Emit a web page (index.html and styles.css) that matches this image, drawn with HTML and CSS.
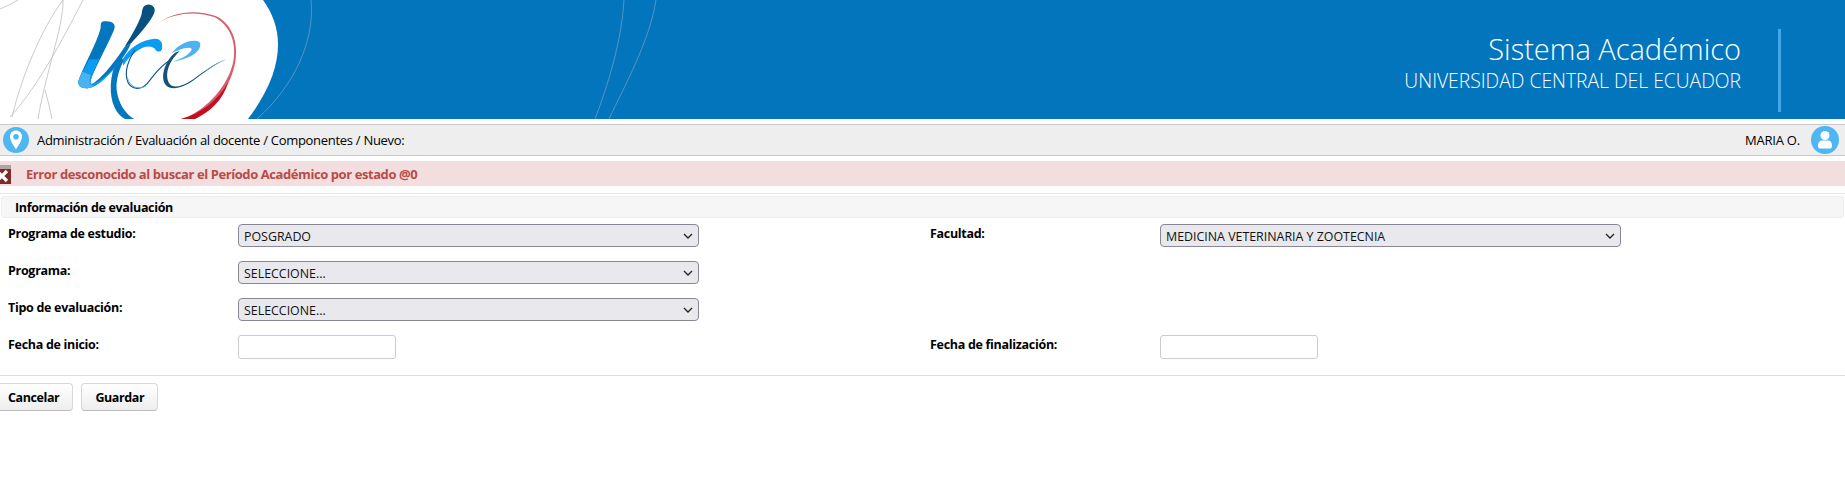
FILE: index.html
```html
<!DOCTYPE html>
<html lang="es">
<head>
<meta charset="utf-8">
<title>Sistema Académico</title>
<link rel="stylesheet" href="styles.css">
</head>
<body>
<header class="banner">
  <svg class="banner-art" viewBox="0 0 760 119" width="760" height="119" aria-hidden="true">
    <path d="M263 0 C285 30 285 70 248 119 L0 119 L0 0 Z" fill="#fff"/>
    <g fill="none" stroke="#bdbdbd" stroke-width=".8">
      <path d="M0 9 C7 6 13 3 18 0"/>
      <path d="M63 0 C42 28 22 75 12 117"/>
      <path d="M83 0 C70 25 40 85 10 117"/>
      <path d="M63 0 C64 25 45 75 38 119"/>
      <path d="M45 90 C48 100 50 110 52 119"/>
    </g>
    <g fill="none" stroke="#5c97c4" stroke-width=".9">
      <path d="M311 0 C315 40 295 85 257 119"/>
      <path d="M624 0 C622 40 608 85 595 119"/>
      <path d="M656 0 C650 40 625 85 609 119"/>
    </g>
    <g transform="translate(60 0) scale(.33333)">
      <!-- red ring -->
      <path d="M295 70 C340 38 410 32 465 52 C512 78 530 130 520 185 C505 255 445 325 370 357 L405 357 C465 325 512 260 526 185 C536 125 515 70 467 48 C410 28 340 34 295 70 Z" fill="#d85b69"/>
      <path d="M362 357 C425 340 475 300 505 245 C490 300 450 335 405 357 Z" fill="#c40f20"/>
      <!-- long descender -->
      <path d="M170 180 C150 225 145 285 165 325 C172 340 182 350 195 357 L222 357 C195 340 175 310 170 270 C167 240 178 205 195 175 Z" fill="#0277bd"/>
      <!-- dark top stroke -->
      <path d="M262 14 C248 16 247 28 245 42 C235 75 212 110 193 142 L213 130 C240 100 272 65 283 38 C288 25 278 12 262 14 Z" fill="#07507f"/>
      <!-- U -->
      <path d="M135 64 C122 64 122 72 122 84 C110 130 75 190 58 235 C50 255 60 266 82 265 C115 262 150 222 185 178 C195 165 205 150 213 130 L193 142 C165 185 125 235 100 250 C90 256 90 245 95 232 C115 185 145 130 162 90 C170 72 155 62 135 64 Z" fill="#0277bd"/>
      <path d="M88 178 C78 198 65 220 58 235 C50 255 60 266 82 265 C115 262 150 222 180 185 C150 220 118 245 100 250 C90 256 90 245 95 232 C100 215 110 195 118 178 Z" fill="#0a9bf2"/>
      <path d="M68 215 L58 235 C50 255 60 266 82 265 C90 264 96 261 103 257 C88 258 86 245 92 225 Z" fill="#4cb3f0"/>
      <!-- c -->
      <path d="M188 178 C205 145 245 118 285 116 C305 117 310 132 305 150 C300 156 292 156 287 150 C280 135 252 135 228 155 C212 168 202 176 190 198 Z" fill="#0a9bf2"/>
      <path d="M225 150 C205 178 192 215 203 245 C212 265 240 275 262 250 C280 230 295 200 335 178" fill="none" stroke="#0f5a8c" stroke-width="3.500"/>
      <path d="M202 232 C208 258 230 272 258 258" fill="none" stroke="#4cb3f0" stroke-width="3"/>
      <!-- e -->
      <path d="M335 160 C355 130 395 115 418 125 C428 140 412 160 385 172 C365 180 350 184 335 186 C365 176 395 160 395 146 C385 138 355 150 335 160 Z" fill="#4cb3f0"/>
      <path d="M345 158 C318 180 300 225 315 252 C330 275 370 265 405 238 C440 212 470 190 500 178 C465 190 435 212 400 238 C365 262 335 268 325 245 C315 220 325 185 360 152 Z" fill="#15527f"/>
      <path d="M440 212 C460 197 480 186 500 178 C480 184 458 196 438 210 Z" fill="#62a9d8"/>
    </g>
  </svg>
  <div class="banner-titles">
    <div class="banner-name">Sistema Académico</div>
    <div class="banner-sub">UNIVERSIDAD CENTRAL DEL ECUADOR</div>
  </div>
</header>

<nav class="crumbs">
  <span class="round-icon">
    <svg viewBox="0 0 26 26" width="26" height="26" aria-hidden="true">
      <circle cx="13" cy="13" r="13" fill="#4fb6f4"/>
      <path fill-rule="evenodd" d="M13 3.500 C9.400 3.500 7 6.200 7 9.600 C7 13.500 10.500 18.500 13 22.500 C15.500 18.500 19 13.500 19 9.600 C19 6.200 16.600 3.500 13 3.500 Z M13 7 A2.800 2.800 0 1 1 13 12.600 A2.800 2.800 0 1 1 13 7 Z" fill="#fff"/>
    </svg>
  </span>
  <span class="crumb-path">Administración / Evaluación al docente / Componentes / Nuevo:</span>
  <span class="crumb-user">MARIA O.</span>
  <span class="round-icon">
    <svg viewBox="0 0 28 28" width="28" height="28" aria-hidden="true">
      <circle cx="14" cy="14" r="14" fill="#4fb6f4"/>
      <circle cx="14" cy="9.500" r="4.500" fill="#fff"/>
      <path d="M7 20 C7 16 9 14.500 11 14.500 L17 14.500 C19 14.500 21 16 21 20 C21 22 20 22.500 18.500 22.500 L9.500 22.500 C8 22.500 7 22 7 20 Z" fill="#fff"/>
    </svg>
  </span>
</nav>

<div class="alert">
  <svg class="alert-icon" viewBox="0 0 20 19" width="20" height="19" aria-hidden="true">
    <rect x="0" y="0" width="20" height="19" fill="#7d2a2a"/>
    <rect x="0" y="0" width="20" height="4" fill="#b3a4a4"/>
    <path d="M6 6 L16 16 M16 6 L6 16" stroke="#fff" stroke-width="3.200"/>
  </svg>
  <span class="alert-text">Error desconocido al buscar el Período Académico por estado @0</span>
</div>

<main class="content">
  <h2 class="section-title">Información de evaluación</h2>
  <form class="form-grid">
    <div class="field">
      <label class="field-label" for="f1">Programa de estudio:</label>
      <select class="field-select" id="f1"><option>POSGRADO</option></select>
    </div>
    <div class="field">
      <label class="field-label" for="f2">Facultad:</label>
      <select class="field-select" id="f2"><option>MEDICINA VETERINARIA Y ZOOTECNIA</option></select>
    </div>
    <div class="field">
      <label class="field-label" for="f3">Programa:</label>
      <select class="field-select" id="f3"><option>SELECCIONE...</option></select>
    </div>
    <div class="field"></div>
    <div class="field">
      <label class="field-label" for="f4">Tipo de evaluación:</label>
      <select class="field-select" id="f4"><option>SELECCIONE...</option></select>
    </div>
    <div class="field"></div>
    <div class="field">
      <label class="field-label" for="f5">Fecha de inicio:</label>
      <input class="field-date" id="f5" type="text">
    </div>
    <div class="field">
      <label class="field-label" for="f6">Fecha de finalización:</label>
      <input class="field-date" id="f6" type="text">
    </div>
  </form>
  <div class="actions">
    <button class="btn" type="button">Cancelar</button>
    <button class="btn" type="button">Guardar</button>
  </div>
</main>
</body>
</html>
```
FILE: styles.css
```css
* { box-sizing: border-box; }
html, body { margin: 0; padding: 0; background: #fff; overflow: hidden; }
body { font-family: "Open Sans", "Noto Sans", sans-serif; font-size: 13px; color: #000; height: 481px; }

.banner { position: relative; height: 119px; background: #0275bd; display: flex; justify-content: flex-end; overflow: hidden; }
.banner-art { position: absolute; left: 0; top: 0; }
.banner-titles { position: relative; height: 83px; margin: 29px 64px 0 0; padding-right: 37px; border-right: 3px solid #44a6e6; color: #fff; text-align: right; box-sizing: content-box; }
.banner-name { font-size: 29px; line-height: 38px; font-weight: 300; margin-top: 1px; }
.banner-sub { font-size: 19.3px; line-height: 26px; font-weight: 300; }

.crumbs { margin-top: 5px; height: 32px; background: #eee; border-top: 1px solid #c8c8c8; border-bottom: 1px solid #c8c8c8; display: flex; align-items: center; padding: 0 6px 0 3px; }
.round-icon { display: flex; flex: none; }
.crumb-path { margin-left: 8px; flex: 1; font-size: 13px; letter-spacing: -.29px; }
.crumb-user { margin-right: 11px; font-size: 13px; letter-spacing: -.2px; }

.alert { margin-top: 5px; height: 25px; background: #f2dede; display: flex; align-items: center; overflow: hidden; }
.alert-icon { flex: none; margin-left: -9px; margin-top: 1px; }
.alert-text { margin-left: 15px; color: #b94a48; font-weight: 700; font-size: 13px; letter-spacing: -.42px; }

.content { margin-top: 7px; border-top: 1px solid #e8e8e8; padding-top: 2px; }
.section-title { margin: 0 1px 0; height: 22px; padding-left: 13px; background: #f6f6f6; border: 1px solid #eee; border-radius: 3px; font-size: 12.5px; font-weight: 700; line-height: 21px; letter-spacing: -.33px; }

.form-grid { display: grid; grid-template-columns: 922px 1fr; grid-auto-rows: 37px; margin-top: 6px; height: 148px; }
.field { display: flex; align-items: flex-start; padding-left: 8px; }
.field-label { width: 230px; flex: none; padding-top: 1px; font-weight: 700; font-size: 12.5px; line-height: 18px; letter-spacing: -.3px; }
.field-select { appearance: none; width: 461px; height: 23px; background: #e9e8ed url("data:image/svg+xml,%3Csvg xmlns='http://www.w3.org/2000/svg' width='10' height='6'%3E%3Cpath d='M1 1l4 4 4-4' fill='none' stroke='%23222' stroke-width='1.3'/%3E%3C/svg%3E") no-repeat right 5px center; border: 1px solid #8a8794; border-radius: 4px; font-family: inherit; font-size: 12.4px; color: #111; padding: 1px 5px 0; }
.field-date { width: 158px; height: 24px; background: #fff; border: 1px solid #ccc; border-radius: 3px; }

.actions { margin-top: 3px; border-top: 1px solid #ddd; padding-top: 7px; display: flex; gap: 8px; margin-left: 0; }
.btn { height: 28px; padding: 0 13px; background: linear-gradient(#fff, #eee); border: 1px solid #d8d8d8; border-bottom-color: #bbb; border-radius: 4px; font-family: inherit; font-weight: 700; font-size: 12.5px; letter-spacing: -.4px; color: #000; }
.btn:first-child { margin-left: -6px; }
```
